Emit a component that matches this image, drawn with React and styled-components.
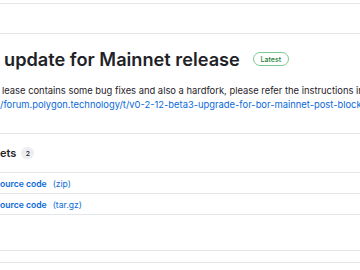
import React from 'react'
import styled, { createGlobalStyle } from 'styled-components'

const GlobalStyle = createGlobalStyle`
  html, body {
    margin: 0;
    padding: 0;
    background: #ffffff;
  }
  body {
    font-family: Inter, "Liberation Sans", Arial, sans-serif;
    color: #1f2328;
  }
`

const Page = styled.div`
  width: 360px;
  height: 270px;
  overflow: hidden;
  padding-top: 3px;
  box-sizing: border-box;
`

const TopStrip = styled.div`
  height: 29px;
  border-top: 1px solid #e4e7ea;
  border-bottom: 1px solid #e4e7ea;
`

const Body = styled.section`
  padding-top: 13px;
`

const TitleRow = styled.div`
  display: flex;
  align-items: center;
  gap: 13px;
  white-space: nowrap;
`

const Title = styled.h1`
  margin: 0;
  padding-left: 4px;
  font-size: 18.2px;
  line-height: 24px;
  font-weight: 600;
  color: #1f2328;
`

const Badge = styled.span`
  display: inline-flex;
  align-items: center;
  justify-content: center;
  width: 36px;
  height: 14px;
  box-sizing: border-box;
  border: 1px solid #7cc98f;
  border-radius: 8px;
  font-size: 7px;
  font-weight: 500;
  color: #1a7f37;
`

const Text = styled.p`
  margin: 13px 0 0;
  padding-left: 2px;
  font-size: 9.4px;
  line-height: 14px;
  white-space: nowrap;
  color: #1f2328;
`

const Link = styled.a`
  display: inline-block;
  margin-left: -2px;
  color: #0969da;
  text-decoration: none;
`

const Divider = styled.hr`
  margin: 21px 0 0;
  border: 0;
  border-top: 1px solid #e4e7ea;
`

const AssetsHead = styled.div`
  display: flex;
  align-items: center;
  gap: 5px;
  margin-top: 11px;
  height: 16px;
`

const AssetsTitle = styled.h2`
  margin: 0;
  font-size: 11px;
  line-height: 16px;
  font-weight: 600;
`

const Counter = styled.span`
  display: inline-flex;
  align-items: center;
  justify-content: center;
  width: 13px;
  height: 12px;
  border-radius: 6px;
  background: #eceef1;
  font-size: 6.8px;
  font-weight: 500;
  color: #1f2328;
`

const AssetList = styled.ul`
  list-style: none;
  margin: 11px 0 0;
  padding: 0;
  border-top: 1px solid #e4e7ea;
`

const AssetRow = styled.li`
  display: flex;
  align-items: center;
  gap: 6px;
  height: 21px;
  padding-top: 1px;
  box-sizing: border-box;
  border-bottom: 1px solid #e4e7ea;
  font-size: 8.6px;
  color: #0969da;
  white-space: nowrap;
`

const AssetName = styled.span`
  font-weight: 600;
`

const Footer = styled.div`
  margin-top: 35px;
  height: 11px;
  border-top: 1px solid #e4e7ea;
  border-bottom: 1px solid #e4e7ea;
`

const assets = [
  { name: 'ource code', kind: '(zip)' },
  { name: 'ource code', kind: '(tar.gz)' },
]

export default function App() {
  return (
    <>
      <GlobalStyle />
      <Page>
        <TopStrip />
        <Body>
          <TitleRow>
            <Title>update for Mainnet release</Title>
            <Badge>Latest</Badge>
          </TitleRow>
          <Text>
            lease contains some bug fixes and also a hardfork, please refer the instructions in the forum post
            <br />
            <Link href="#">
              /forum.polygon.technology/t/v0-2-12-beta3-upgrade-for-bor-mainnet-post-block-hardfork
            </Link>
          </Text>
          <Divider />
          <AssetsHead>
            <AssetsTitle>ets</AssetsTitle>
            <Counter>2</Counter>
          </AssetsHead>
          <AssetList>
            {assets.map((a) => (
              <AssetRow key={a.kind}>
                <AssetName>{a.name}</AssetName>
                <span>{a.kind}</span>
              </AssetRow>
            ))}
          </AssetList>
          <Footer />
        </Body>
      </Page>
    </>
  )
}
